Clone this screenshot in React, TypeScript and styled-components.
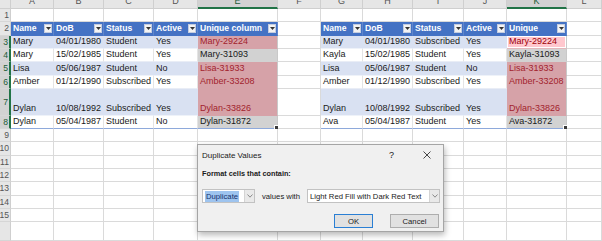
import React from 'react';
import styled, { createGlobalStyle, css } from 'styled-components';

const GlobalStyle = createGlobalStyle`
  html, body {
    margin: 0;
    padding: 0;
    background: #fff;
    overflow: hidden;
  }
  body {
    font-family: 'Liberation Sans', Arial, sans-serif;
    color: #1a1a1a;
  }
`;

type Kind = 'empty' | 'head' | 'band' | 'plain' | 'dup' | 'sel' | 'active';

interface CellData {
  text?: string;
  kind: Kind;
  right?: boolean;
  last?: boolean;
  handle?: boolean;
}

const COLS = ['A', 'B', 'C', 'D', 'E', 'F', 'G', 'H', 'I', 'J', 'K', 'L'];
const SELECTED_COLS = ['E', 'K'];
const SELECTED_ROWS = [3, 4, 5, 6, 7, 8];

type Row = [string, string, string, string, string, Kind];

const left: Row[] = [
  ['Mary', '04/01/1980', 'Student', 'Yes', 'Mary-29224', 'dup'],
  ['Mary', '15/02/1985', 'Student', 'Yes', 'Mary-31093', 'sel'],
  ['Lisa', '05/06/1987', 'Student', 'No', 'Lisa-31933', 'dup'],
  ['Amber', '01/12/1990', 'Subscribed', 'Yes', 'Amber-33208', 'dup'],
  ['Dylan', '10/08/1992', 'Subscribed', 'Yes', 'Dylan-33826', 'dup'],
  ['Dylan', '05/04/1987', 'Student', 'No', 'Dylan-31872', 'sel'],
];

const right: Row[] = [
  ['Mary', '04/01/1980', 'Subscribed', 'Yes', 'Mary-29224', 'active'],
  ['Kayla', '15/02/1985', 'Student', 'Yes', 'Kayla-31093', 'sel'],
  ['Lisa', '05/06/1987', 'Student', 'No', 'Lisa-31933', 'dup'],
  ['Amber', '01/12/1990', 'Subscribed', 'Yes', 'Amber-33208', 'dup'],
  ['Dylan', '10/08/1992', 'Subscribed', 'Yes', 'Dylan-33826', 'dup'],
  ['Ava', '05/04/1987', 'Student', 'Yes', 'Ava-31872', 'sel'],
];

const empty: CellData = { kind: 'empty' };

const tableRow = (r: Row, i: number): CellData[] => {
  const last = i === 5;
  const base: Kind = i % 2 === 0 ? 'band' : 'plain';
  return [
    { text: r[0], kind: base, last },
    { text: r[1], kind: base, last, right: true },
    { text: r[2], kind: base, last },
    { text: r[3], kind: base, last },
    { text: r[4], kind: r[5], last, handle: last },
  ];
};

const headRow = (labels: string[]): CellData[] => labels.map((text) => ({ text, kind: 'head' as Kind }));

const buildGrid = (): CellData[][] => {
  const rows: CellData[][] = [];
  rows.push(COLS.map(() => empty));
  rows.push([
    ...headRow(['Name', 'DoB', 'Status', 'Active', 'Unique column']),
    empty,
    ...headRow(['Name', 'DoB', 'Status', 'Active', 'Unique']),
    empty,
  ]);
  for (let i = 0; i < 6; i++) {
    rows.push([...tableRow(left[i], i), empty, ...tableRow(right[i], i), empty]);
  }
  for (let i = 0; i < 8; i++) rows.push(COLS.map(() => empty));
  return rows;
};

const kindStyles: Record<Kind, ReturnType<typeof css>> = {
  empty: css`
    background: #fff;
  `,
  head: css`
    background: #4472c4;
    color: #fff;
    font-weight: bold;
    font-size: 8.6px;
    align-items: center;
    justify-content: space-between;
    padding: 0 1px 0 2px;
    border-right-color: #5f86cc;
    border-bottom-color: #4472c4;
  `,
  band: css`
    background: #d9e1f2;
    border-right-color: #d9e1f2;
    border-bottom-color: #eef2f9;
  `,
  plain: css`
    background: #fff;
    border-right-color: #e4e4e4;
    border-bottom-color: #e9edf6;
  `,
  dup: css`
    background: #d6a2a8;
    color: #a2222d;
    border-right-color: #c9c9c9;
    border-bottom-color: #d6a2a8;
  `,
  sel: css`
    background: #d2d2d2;
    color: #1a1a1a;
    border-right-color: #c9c9c9;
    border-bottom-color: #d2d2d2;
  `,
  active: css`
    background: #ffc7ce;
    color: #9c0006;
    border-right-color: #c9c9c9;
    border-bottom-color: #e2b6bb;
    box-shadow: inset 0 0 0 1px #fff;
  `,
};

const Page = styled.div`
  position: relative;
  width: 602px;
  height: 241px;
  overflow: hidden;
`;

const Sheet = styled.div`
  display: grid;
  grid-template-columns: 11px 43px 50px 50px 44px 80px 43px 42px 50px 51px 43px 60px 1fr;
  grid-template-rows: 9px repeat(6, 13.33px) 26.67px repeat(8, 13.33px) 1fr;
  width: 100%;
  height: 100%;
`;

const Corner = styled.div`
  background: #e6e6e6;
  border-right: 1px solid #cfcfcf;
  border-bottom: 1px solid #cfcfcf;
`;

const ColHead = styled.div<{ $sel?: boolean }>`
  display: flex;
  justify-content: center;
  overflow: hidden;
  box-sizing: border-box;
  background: ${(p) => (p.$sel ? '#d2d2d2' : '#e6e6e6')};
  color: ${(p) => (p.$sel ? '#1d5c38' : '#555')};
  border-right: 1px solid #cfcfcf;
  border-bottom: ${(p) => (p.$sel ? '2px solid #217346' : '1px solid #cfcfcf')};
  font-size: 9px;
  line-height: 9px;

  span {
    margin-top: -3px;
  }
`;

const RowHead = styled.div<{ $sel?: boolean }>`
  display: flex;
  align-items: center;
  justify-content: flex-end;
  padding-right: 1px;
  overflow: hidden;
  box-sizing: border-box;
  background: ${(p) => (p.$sel ? '#d2d2d2' : '#e6e6e6')};
  color: ${(p) => (p.$sel ? '#1d5c38' : '#555')};
  border-right: ${(p) => (p.$sel ? '2px solid #217346' : '1px solid #cfcfcf')};
  border-bottom: 1px solid #d6d6d6;
  font-size: 8.6px;
  white-space: nowrap;
`;

const Cell = styled.div<{ $kind: Kind; $right?: boolean; $last?: boolean; $handle?: boolean }>`
  position: relative;
  display: flex;
  align-items: flex-end;
  justify-content: ${(p) => (p.$right ? 'flex-end' : 'flex-start')};
  padding: 0 2px 1px;
  box-sizing: border-box;
  overflow: visible;
  white-space: nowrap;
  font-size: 9px;
  line-height: 11px;
  border-right: 1px solid #dadada;
  border-bottom: 1px solid #dadada;
  ${(p) => kindStyles[p.$kind]}
  ${(p) =>
    p.$last &&
    css`
      border-bottom-color: #8ea9db;
    `}
  ${(p) =>
    p.$handle &&
    css`
      &::after {
        content: '';
        position: absolute;
        right: -2px;
        bottom: -2px;
        width: 3px;
        height: 3px;
        background: #3a3a3a;
        border: 1px solid #fff;
      }
    `}
`;

const FilterButton = styled.span`
  display: flex;
  align-items: center;
  justify-content: center;
  flex: none;
  width: 8px;
  height: 9px;
  box-sizing: border-box;
  background: #f3f3f3;
  border: 1px solid #c4cde0;
`;

const FilterIcon = () => (
  <FilterButton>
    <svg width="5" height="3" viewBox="0 0 5 3">
      <polygon points="0,0 5,0 2.5,3" fill="#333" />
    </svg>
  </FilterButton>
);

/* dialog */

const Dialog = styled.div`
  position: absolute;
  left: 197px;
  top: 144px;
  width: 247px;
  height: 88px;
  box-sizing: border-box;
  background: #f0f0f0;
  border: 1px solid #a5a5a5;
  box-shadow: 1px 3px 6px rgba(0, 0, 0, 0.28);
  display: flex;
  flex-direction: column;
  padding: 0 4px;
  color: #1a1a1a;
`;

const TitleBar = styled.div`
  display: flex;
  align-items: center;
  justify-content: space-between;
  height: 20px;
  font-size: 8px;
`;

const TitleButtons = styled.div`
  display: flex;
  align-items: center;
  gap: 29px;
  padding-right: 8px;
  font-size: 9px;
`;

const Label = styled.div`
  margin-top: 4px;
  font-weight: bold;
  font-size: 7.3px;
  line-height: 10px;
`;

const FieldRow = styled.div`
  display: flex;
  align-items: center;
  margin-top: 10px;
  height: 14px;
  font-size: 7.7px;
`;

const Select = styled.div<{ $width: number }>`
  display: flex;
  align-items: stretch;
  width: ${(p) => p.$width}px;
  height: 14px;
  box-sizing: border-box;
  background: #fff;
  border: 1px solid #c2c2c2;
  flex: none;
`;

const SelectValue = styled.div<{ $picked?: boolean }>`
  flex: 1;
  display: flex;
  align-items: center;
  padding-left: 2px;
  overflow: hidden;
  white-space: nowrap;
  ${(p) =>
    p.$picked &&
    css`
      span {
        background: #9ec4ef;
        color: #14306b;
        padding: 1px 1px;
      }
    `}
`;

const SelectArrow = styled.div`
  width: 9px;
  display: flex;
  align-items: center;
  justify-content: center;
  background: #e9e9e9;
  border-left: 1px solid #d4d4d4;
`;

const Chevron = () => (
  <svg width="6" height="4" viewBox="0 0 6 4">
    <polyline points="0.5,0.5 3,3.2 5.5,0.5" fill="none" stroke="#8a8a8a" strokeWidth="1" />
  </svg>
);

const FieldText = styled.span`
  margin: 0 7px;
  white-space: nowrap;
`;

const ButtonRow = styled.div`
  display: flex;
  justify-content: flex-end;
  gap: 17px;
  margin-top: 11px;
`;

const DialogButton = styled.div<{ $width: number; $primary?: boolean }>`
  width: ${(p) => p.$width}px;
  height: 14px;
  box-sizing: border-box;
  display: flex;
  align-items: center;
  justify-content: center;
  background: #e1e1e1;
  border: 1px solid ${(p) => (p.$primary ? '#2a7fd4' : '#adadad')};
  font-size: 7.7px;
`;

const CloseIcon = () => (
  <svg width="8" height="8" viewBox="0 0 8 8">
    <path d="M0.5 0.5 L7.5 7.5 M7.5 0.5 L0.5 7.5" stroke="#333" strokeWidth="0.9" />
  </svg>
);

const DuplicateDialog = () => (
  <Dialog>
    <TitleBar>
      <span>Duplicate Values</span>
      <TitleButtons>
        <span>?</span>
        <CloseIcon />
      </TitleButtons>
    </TitleBar>
    <Label>Format cells that contain:</Label>
    <FieldRow>
      <Select $width={53}>
        <SelectValue $picked>
          <span>Duplicate</span>
        </SelectValue>
        <SelectArrow>
          <Chevron />
        </SelectArrow>
      </Select>
      <FieldText>values with</FieldText>
      <Select $width={133}>
        <SelectValue>Light Red Fill with Dark Red Text</SelectValue>
        <SelectArrow>
          <Chevron />
        </SelectArrow>
      </Select>
    </FieldRow>
    <ButtonRow>
      <DialogButton $width={39} $primary>
        OK
      </DialogButton>
      <DialogButton $width={49}>Cancel</DialogButton>
    </ButtonRow>
  </Dialog>
);

const App = () => {
  const grid = buildGrid();
  return (
    <Page>
      <GlobalStyle />
      <Sheet>
        <Corner />
        {COLS.map((c) => (
          <ColHead key={c} $sel={SELECTED_COLS.includes(c)}>
            <span>{c}</span>
          </ColHead>
        ))}
        {grid.map((row, r) => (
          <React.Fragment key={r}>
            <RowHead $sel={SELECTED_ROWS.includes(r + 1)}>{r < 15 ? r + 1 : ''}</RowHead>
            {row.map((cell, c) => (
              <Cell
                key={c}
                $kind={cell.kind}
                $right={cell.right}
                $last={cell.last}
                $handle={cell.handle}
              >
                {cell.kind === 'head' ? (
                  <>
                    <span>{cell.text}</span>
                    <FilterIcon />
                  </>
                ) : (
                  cell.text
                )}
              </Cell>
            ))}
          </React.Fragment>
        ))}
      </Sheet>
      <DuplicateDialog />
    </Page>
  );
};

export default App;
